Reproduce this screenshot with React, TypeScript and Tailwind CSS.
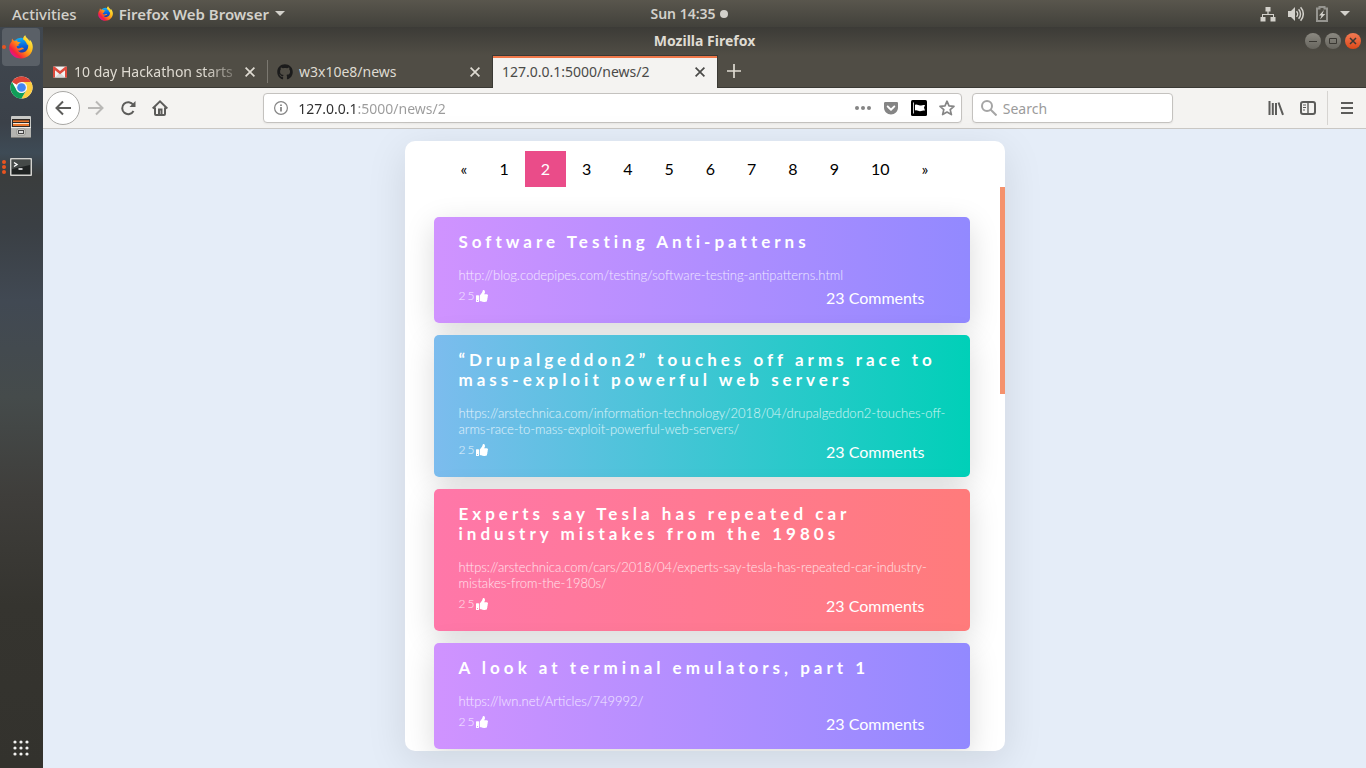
import React from "react";
import { FaGithub, FaThumbsUp, FaGetPocket } from "react-icons/fa";

type Story = { title: string; url: string; tone: string };

const stories: Story[] = [
  {
    title: "Software Testing Anti-patterns",
    url: "http://blog.codepipes.com/testing/software-testing-antipatterns.html",
    tone: "bg-[linear-gradient(90deg,#d093ff,#9289ff)]",
  },
  {
    title: "“Drupalgeddon2” touches off arms race to mass-exploit powerful web servers",
    url: "https://arstechnica.com/information-technology/2018/04/drupalgeddon2-touches-off-arms-race-to-mass-exploit-powerful-web-servers/",
    tone: "bg-[linear-gradient(90deg,#7cbcee,#00d0b8)]",
  },
  {
    title: "Experts say Tesla has repeated car industry mistakes from the 1980s",
    url: "https://arstechnica.com/cars/2018/04/experts-say-tesla-has-repeated-car-industry-mistakes-from-the-1980s/",
    tone: "bg-[linear-gradient(90deg,#ff77a9,#ff7b7b)]",
  },
  {
    title: "A look at terminal emulators, part 1",
    url: "https://lwn.net/Articles/749992/",
    tone: "bg-[linear-gradient(90deg,#d093ff,#9289ff)]",
  },
];

const pages = ["«", "1", "2", "3", "4", "5", "6", "7", "8", "9", "10", "»"];

function FirefoxLogo({ className, id }: { className: string; id: string }) {
  return (
    <svg viewBox="0 0 24 24" className={className} aria-hidden="true">
      <defs>
        <linearGradient id={id + "a"} x1="0.9" y1="0.1" x2="0.15" y2="0.85">
          <stop offset="0" stopColor="#fff44f" />
          <stop offset="0.35" stopColor="#ffbd1a" />
          <stop offset="0.6" stopColor="#ff7a1a" />
          <stop offset="0.85" stopColor="#f5223c" />
          <stop offset="1" stopColor="#e3148c" />
        </linearGradient>
        <linearGradient id={id + "b"} x1="0.4" y1="0" x2="0.5" y2="1">
          <stop offset="0" stopColor="#12b5f5" />
          <stop offset="0.5" stopColor="#0a62dc" />
          <stop offset="1" stopColor="#2a2a90" />
        </linearGradient>
      </defs>
      <circle cx="12" cy="11.5" r="8.8" fill={`url(#${id}b)`} />
      <path
        fill={`url(#${id}a)`}
        d="M3.2 3.6c-.5 1-.6 2-.5 3C1.200 8.200.2 10.400.2 12.600c0 6.100 5.200 11 11.800 11s11.800-5 11.800-11.500c0-3.200-1.500-6-3.300-7.500.2.8.3 1.500.2 2C19.700 3.800 16.700 2.800 16.300.2c-1.500.8-2.300 2.600-2.200 4.400 1.800.8 3.800 3 4 5.600.6-.3.8-.9.8-1.400 1 3.200-.2 6.200-2.400 7.700-2.800 1.900-6.300 1-7.700-1 1.800.5 3.100-.4 4-1 .7-.4 1.500.2 1.800-.4.300-.6-.5-1.500-1.700-1.500-1.200 0-1.900 1-3.500.8-1.200-.2-1.800-1.100-1.700-1.900.1-.8 1.100-.8 1.900-.5.1-.7 0-1.200-.2-1.700.8-.8 2.100-1.300 2.300-1.700.1-.6-2-.5-2.600-.7-.7-.2-.9-1-.9-1.500C6.800 5.400 6 5.700 5.600 5.900 4.500 5.500 3.500 4.800 3.200 3.600z"
      />
    </svg>
  );
}

function ChromeLogo() {
  return (
    <svg viewBox="0 0 48 48" className="size-[23px]" aria-hidden="true">
      <circle cx="24" cy="24" r="23" fill="#fff" />
      <path d="M24 24 4.080 12.500A23 23 0 0 1 43.920 12.500H24z" fill="#db4437" />
      <path d="M43.920 12.500A23 23 0 0 1 24 47L33.960 29.750A11.500 11.500 0 0 0 24 12.500z" fill="#ffcd40" />
      <path d="M4.080 12.500 14.040 29.750A11.500 11.500 0 0 0 33.960 29.750L24 47A23 23 0 0 1 4.080 12.500z" fill="#0f9d58" />
      <circle cx="24" cy="24" r="11.500" fill="#f1f1f1" />
      <circle cx="24" cy="24" r="9" fill="#4285f4" />
    </svg>
  );
}

function FilesIcon() {
  return (
    <svg viewBox="0 0 20 22" className="h-[22px] w-5" aria-hidden="true">
      <rect width="20" height="22" rx="1" fill="#c9c9c6" />
      <rect x="1" y="3" width="18" height="8" fill="#2d2a28" />
      <rect x="2" y="4" width="16" height="1" fill="#a4521f" />
      <rect x="2" y="5" width="16" height="1" fill="#e8772e" />
      <rect x="2" y="7" width="16" height="1" fill="#f7e4d2" />
      <rect x="2" y="8" width="16" height="2" fill="#e8772e" />
      <rect x="0" y="11" width="20" height="10" fill="#b4b4b0" />
      <rect x="0" y="11" width="20" height="1" fill="#ececea" />
      <rect x="0" y="21" width="20" height="1" fill="#7b7b77" />
      <rect x="6" y="13" width="8" height="6" rx="1" fill="#efefed" stroke="#85857f" strokeWidth="0.800" />
      <rect x="7.500" y="14.500" width="5" height="3" fill="#ddd" stroke="#444" />
    </svg>
  );
}

function TerminalIcon() {
  return (
    <svg viewBox="0 0 22 18" className="h-[18px] w-[22px]" aria-hidden="true">
      <rect width="22" height="18" rx="1" fill="#d3d3cf" />
      <rect x="1.500" y="1.500" width="19" height="15" fill="#1f2322" />
      <path d="M2 2h18v5L2 11z" fill="#454a48" />
      <path d="M4 4.500l3 2-3 2M8.500 11h4" stroke="#fff" strokeWidth="1.400" fill="none" />
    </svg>
  );
}

function GmailIcon() {
  return (
    <svg viewBox="0 0 14 12" className="h-3 w-3.5 shrink-0" aria-hidden="true">
      <rect y="0.500" width="14" height="11" rx="1" fill="#f2f2f2" />
      <path d="M2 11.500 7 6.500l5 5z" fill="#d9d9d9" />
      <path d="M0 1.500v10h2V4.300l5 4 5-4v7.200h2v-10C14 .5 12.800.3 12.200.8L7 5 1.800.8C1.200.3 0 .5 0 1.500z" fill="#dd4b3e" />
    </svg>
  );
}

function Cross() {
  return (
    <svg viewBox="0 0 10 10" className="size-2.5" fill="none" stroke="currentColor" strokeWidth="1.700" aria-hidden="true">
      <path d="M.6.6l8.800 8.800M9.400.6.6 9.400" />
    </svg>
  );
}

function Caret() {
  return (
    <svg viewBox="0 0 10 5" className="h-[5px] w-2.5" fill="currentColor" aria-hidden="true">
      <path d="M0 0h10L5 5z" />
    </svg>
  );
}

function Tool({ label, children, className = "" }: { label: string; children: React.ReactNode; className?: string }) {
  return (
    <button aria-label={label} className={`flex h-8 w-8 shrink-0 items-center justify-center ${className || "text-[#5c5c5a]"}`}>
      {children}
    </button>
  );
}

function TopBar() {
  return (
    <header className="grid h-[27px] shrink-0 grid-cols-[1fr_auto_1fr] items-center bg-linear-to-b from-[#59564d] to-[#42413b] text-[14px] leading-5 text-[#d3d1cb]">
      <div className="flex items-center gap-[21px] pl-3 text-[15px]">
        <button className="font-medium">Activities</button>
        <button className="flex items-center gap-1.5 font-semibold">
          <FirefoxLogo id="ff-menu" className="size-[15px]" />
          <span>Firefox Web Browser</span>
          <Caret />
        </button>
      </div>
      <button className="flex items-center gap-1 pl-3 font-semibold">
        Sun 14:35
        <span className="size-2 rounded-full bg-[#d3d1cb]" />
      </button>
      <div className="flex items-center justify-end gap-3 pr-4">
        <svg viewBox="0 0 16 16" className="size-4" fill="currentColor" aria-label="Network">
          <path d="M5.500 1h5v4.500H8.600V8H14v3h1.500v4.500h-5V11H13V9H3v2h2.500v4.500h-5V11H2V8h5.400V5.500H5.500z" />
        </svg>
        <svg viewBox="0 0 16 16" className="size-4" aria-label="Volume">
          <path d="M0 5h3l4-4v14l-4-4H0z" fill="currentColor" />
          <path d="M8.500 5.200a4 4 0 0 1 0 5.600M10.600 3.200a7 7 0 0 1 0 9.600M12.600 1.200a10 10 0 0 1 0 13.600" fill="none" stroke="currentColor" strokeWidth="1.500" />
        </svg>
        <svg viewBox="0 0 12 16" className="h-4 w-3" aria-label="Battery">
          <path d="M1 2.500h2.500V1h5v1.500H11V15H1z" fill="none" stroke="#969590" strokeWidth="2" />
          <path d="M8 4 3 9.500h2.500L4 13.500 9.300 8H6.500z" fill="currentColor" />
        </svg>
        <Caret />
      </div>
    </header>
  );
}

function Dock() {
  return (
    <nav aria-label="Dock" className="flex w-[43px] shrink-0 flex-col justify-between bg-[linear-gradient(180deg,#40474f_0%,#3b4149_13%,#3e4b56_17%,#3a3d3d_20%,#3a3f44_27%,#414953_37%,#454b4b_50%,#3f3e3b_63%,#35342f_78%,#33322d_100%)] pt-px pr-[3px] pl-0.5">
      <ul className="flex flex-col gap-0.5">
        <li>
          <button aria-label="Firefox" className="relative flex h-[38px] w-full items-center justify-center rounded bg-[#5a6067]">
            <span className="absolute left-0 size-1 rounded-full bg-[#e95420]" />
            <FirefoxLogo id="ff-dock" className="size-6" />
          </button>
        </li>
        <li>
          <button aria-label="Chrome" className="flex h-[38px] w-full items-center justify-center">
            <ChromeLogo />
          </button>
        </li>
        <li>
          <button aria-label="Files" className="flex h-[38px] w-full items-center justify-center">
            <FilesIcon />
          </button>
        </li>
        <li>
          <button aria-label="Terminal" className="relative flex h-[38px] w-full items-center justify-center">
            <span className="absolute left-0 flex flex-col gap-px">
              <span className="size-1 rounded-full bg-[#e95420]" />
              <span className="size-1 rounded-full bg-[#e95420]" />
              <span className="size-1 rounded-full bg-[#e95420]" />
            </span>
            <TerminalIcon />
          </button>
        </li>
      </ul>
      <button aria-label="Show applications" className="flex h-10 items-center justify-center">
        <svg viewBox="0 0 16 16" className="size-4" fill="#f2f2f0" aria-hidden="true">
          {[2, 8, 14].map((y) => [2, 8, 14].map((x) => <circle key={`${x}-${y}`} cx={x} cy={y} r="1.600" />))}
        </svg>
      </button>
    </nav>
  );
}

function TitleBar() {
  return (
    <div className="grid h-7 shrink-0 grid-cols-[1fr_auto_1fr] items-center">
      <span />
      <h1 className="text-[14px] leading-5 font-bold text-[#dfdbd2]">Mozilla Firefox</h1>
      <div className="flex justify-end gap-1 pr-[5px] text-[#3a3833]">
        <button aria-label="Minimize" className="flex size-4 items-center justify-center rounded-full bg-linear-to-b from-[#8b8981] to-[#67655e]">
          <svg viewBox="0 0 16 16" className="size-4" stroke="currentColor" aria-hidden="true"><path d="M4 8.500h8" /></svg>
        </button>
        <button aria-label="Maximize" className="flex size-4 items-center justify-center rounded-full bg-linear-to-b from-[#8b8981] to-[#67655e]">
          <svg viewBox="0 0 16 16" className="size-4" fill="none" stroke="currentColor" aria-hidden="true"><path d="M4.500 5.500h7v5h-7z" /></svg>
        </button>
        <button aria-label="Close" className="flex size-4 items-center justify-center rounded-full bg-linear-to-b from-[#f27a52] to-[#dd4814]">
          <svg viewBox="0 0 16 16" className="size-4" stroke="currentColor" strokeWidth="1.500" aria-hidden="true"><path d="M5 5l6 6M11 5l-6 6" /></svg>
        </button>
      </div>
    </div>
  );
}

function TabStrip() {
  return (
    <div className="flex h-[33px] shrink-0 items-stretch border-b border-[#3a3934] text-[14px] leading-5 text-[#dfdbd2]">
      <div className="flex w-56 items-center gap-[7px] pt-0.5 pr-3 pl-2.5">
        <GmailIcon />
        <span className="flex-1 whitespace-nowrap [mask-image:linear-gradient(90deg,#000_80%,transparent_105%)]">10 day Hackathon starts</span>
        <button aria-label="Close tab"><Cross /></button>
      </div>
      <span className="mt-[5px] mb-1 w-px bg-[#7b7870]" />
      <div className="flex w-56 items-center gap-1.5 pt-0.5 pr-3 pl-[9px]">
        <FaGithub className="size-4 text-[#1b1b1b]" />
        <span className="flex-1">w3x10e8/news</span>
        <button aria-label="Close tab"><Cross /></button>
      </div>
      <div className="-mb-px flex w-[226px] items-center border-x border-t border-[#3a3934] bg-[#f4f3f1] pr-3 pl-[9px] text-[#4a4a48] shadow-[inset_0_2px_0_#f0784a]">
        <span className="flex-1">127.0.0.1:5000/news/2</span>
        <button aria-label="Close tab"><Cross /></button>
      </div>
      <button aria-label="New tab" className="flex w-8 items-center justify-center">
        <svg viewBox="0 0 14 14" className="size-3.5" stroke="currentColor" strokeWidth="1.700" aria-hidden="true"><path d="M7 0v14M0 7h14" /></svg>
      </button>
    </div>
  );
}

function Toolbar() {
  return (
    <div className="flex h-[41px] shrink-0 items-center border-b border-[#c9c7c4] bg-[#f4f3f1] pl-[3px] text-[14px] leading-5">
      <button aria-label="Back" className="flex size-[34px] shrink-0 items-center justify-center rounded-full border border-[#a9a8a5] bg-white text-[#5c5c5a]">
        <svg viewBox="0 0 16 16" className="size-4" fill="none" stroke="currentColor" strokeWidth="2" aria-hidden="true"><path d="M16 8H1.500M8 1.500 1.500 8 8 14.500" /></svg>
      </button>
      <Tool label="Forward" className="text-[#b9b8b6]">
        <svg viewBox="0 0 16 16" className="size-4" fill="none" stroke="currentColor" strokeWidth="2" aria-hidden="true"><path d="M0 8h14.500M8 1.500 14.500 8 8 14.500" /></svg>
      </Tool>
      <Tool label="Reload">
        <svg viewBox="0 0 16 16" className="size-4" fill="none" stroke="currentColor" strokeWidth="2" aria-hidden="true">
          <path d="M13.200 4.800A6 6 0 1 0 13.500 11" />
          <path d="M15.500 1v6h-6z" fill="currentColor" stroke="none" />
        </svg>
      </Tool>
      <Tool label="Home">
        <svg viewBox="0 0 16 16" className="size-4" fill="none" stroke="currentColor" strokeWidth="2" aria-hidden="true">
          <path d="M.7 8.500 8 1.400l7.300 7.100M3 7.500V14a1 1 0 0 0 1 1h8a1 1 0 0 0 1-1V7.500" />
          <path d="M7 15V9.500h2.500V15" />
        </svg>
      </Tool>
      <div className="flex-[5]" />
      <div className="flex h-[30px] flex-[39] items-center rounded border border-[#c4c2bf] bg-white pr-1.5 pl-2.5 text-[#858585] shadow-xs">
        <svg viewBox="0 0 14 14" className="size-3.5 shrink-0" fill="none" stroke="currentColor" aria-hidden="true">
          <circle cx="7" cy="7" r="6.400" strokeWidth="1.200" />
          <path d="M7 6v4.500M7 3.500v1.600" strokeWidth="1.800" />
        </svg>
        <input
          aria-label="Address"
          defaultValue="127.0.0.1:5000/news/2"
          className="ml-2.5 min-w-0 flex-1 bg-[linear-gradient(90deg,#2e2e2e_60px,#9b9b9b_60px)] bg-clip-text pt-px text-transparent outline-none"
        />
        <div className="flex items-center gap-3">
          <button aria-label="Page actions">
            <svg viewBox="0 0 16 16" className="size-4" fill="currentColor" aria-hidden="true"><circle cx="2" cy="8" r="2" /><circle cx="8" cy="8" r="2" /><circle cx="14" cy="8" r="2" /></svg>
          </button>
          <button aria-label="Save to Pocket"><FaGetPocket className="size-4" /></button>
          <button aria-label="Flag">
            <svg viewBox="0 0 16 16" className="size-4" aria-hidden="true">
              <rect width="16" height="16" rx="1.500" fill="#000" />
              <path d="M2.500 2.500v11" stroke="#ccc" />
              <path d="M4 5c1.800-1.200 3.200.6 5 .6 1.600 0 3-.6 5-.6l-1 2.800 1 2.800c-2 0-3.400.6-5 .6-1.800 0-3.200-1.600-5-.6z" fill="#fff" />
            </svg>
          </button>
          <button aria-label="Bookmark">
            <svg viewBox="0 0 16 16" className="size-4" fill="none" stroke="currentColor" strokeWidth="1.700" strokeLinejoin="round" aria-hidden="true">
              <path d="M8 1.200l2 4.700 5 .4-3.800 3.300 1.200 5L8 12l-4.400 2.600 1.200-5L1 6.300l5-.4z" />
            </svg>
          </button>
        </div>
      </div>
      <label className="ml-2.5 flex h-[30px] w-[201px] items-center gap-1.5 rounded border border-[#c4c2bf] bg-white pl-2 text-[#a5a5a5] shadow-xs">
        <svg viewBox="0 0 16 16" className="size-4 shrink-0" fill="none" stroke="currentColor" strokeWidth="2" aria-hidden="true"><circle cx="6" cy="6" r="5" /><path d="M9.500 9.500l6 6" /></svg>
        <input aria-label="Search" placeholder="Search" className="min-w-0 flex-1 pt-px outline-none placeholder:text-[#9b9b9b]" />
      </label>
      <div className="flex-[5]" />
      <Tool label="Library">
        <svg viewBox="0 0 16 16" className="size-4" fill="none" stroke="currentColor" strokeWidth="2" aria-hidden="true"><path d="M1.500 1v14M4.800 3v12M8 3v12M10.500 2.500l4.500 12.300" /></svg>
      </Tool>
      <Tool label="Sidebars">
        <svg viewBox="0 0 16 14" className="h-3.5 w-4" fill="none" stroke="currentColor" aria-hidden="true">
          <rect x="1" y="1" width="14" height="12" rx="2" strokeWidth="2" />
          <path d="M8 1v12" strokeWidth="1.400" />
          <path d="M3 4h3M3 6.500h3M3 9h2" />
        </svg>
      </Tool>
      <span className="ml-[3px] h-[34px] w-px bg-[#d6d4d1]" />
      <Tool label="Menu" className="mx-[3px] text-[#5c5c5a]">
        <svg viewBox="0 0 12 12" className="size-3" stroke="currentColor" strokeWidth="2" aria-hidden="true"><path d="M0 1h12M0 6h12M0 11h12" /></svg>
      </Tool>
    </div>
  );
}

function StoryCard({ story }: { story: Story }) {
  return (
    <article className={`rounded-[5px] px-[25px] py-[15px] text-white shadow-[0_8px_30px_rgba(0,0,0,0.15)] ${story.tone}`}>
      <h2 className="text-[17px] leading-5 font-bold tracking-[4px]">{story.title}</h2>
      <a href={story.url} className="mt-[15px] -mr-2 block text-[13px] leading-4 font-light text-white/80">{story.url}</a>
      <div className="mt-[5px] flex items-start justify-between pr-5">
        <button className="flex h-4 items-center text-[12px] leading-4 font-light">
          <span className="tracking-[2px] text-white/80">25</span>
          <FaThumbsUp className="size-3" aria-label="likes" />
        </button>
        <a href="#comments" className="text-[16px] leading-5">23 Comments</a>
      </div>
    </article>
  );
}

function NewsPage() {
  return (
    <main className="flex min-h-0 flex-1 justify-center bg-[#e5edf8] pt-3 pb-[17px] font-[Lato,sans-serif]">
      <section className="flex w-full max-w-[600px] flex-col overflow-hidden rounded-[10px] bg-white shadow-[0_10px_40px_rgba(0,0,0,0.1)]">
        <nav aria-label="Pages" className="flex shrink-0 pt-2.5 pl-10 text-[16px] leading-5">
          {pages.map((p) => (
            <a
              key={p}
              href={`#${p}`}
              aria-current={p === "2" ? "page" : undefined}
              className={p === "2" ? "bg-[#ea4c89] px-4 py-2 text-white" : "px-4 py-2 text-black"}
            >
              {p}
            </a>
          ))}
        </nav>
        <div className="flex min-h-0 flex-1">
          <div className="flex min-w-0 flex-1 flex-col gap-3 overflow-hidden pt-[30px] pr-[30px] pl-[29px]">
            {stories.map((s) => (
              <StoryCard key={s.title} story={s} />
            ))}
          </div>
          <div className="w-[5px]">
            <div className="h-[207px] bg-[#f5926d]" />
          </div>
        </div>
      </section>
    </main>
  );
}

export default function App() {
  return (
    <div className="flex h-screen flex-col overflow-hidden font-['Noto_Sans',sans-serif]">
      <TopBar />
      <div className="flex min-h-0 flex-1">
        <Dock />
        <div className="flex min-w-0 flex-1 flex-col bg-[linear-gradient(180deg,#3c3b37_0px,#504d45_28px)]">
          <TitleBar />
          <TabStrip />
          <Toolbar />
          <NewsPage />
        </div>
      </div>
    </div>
  );
}
